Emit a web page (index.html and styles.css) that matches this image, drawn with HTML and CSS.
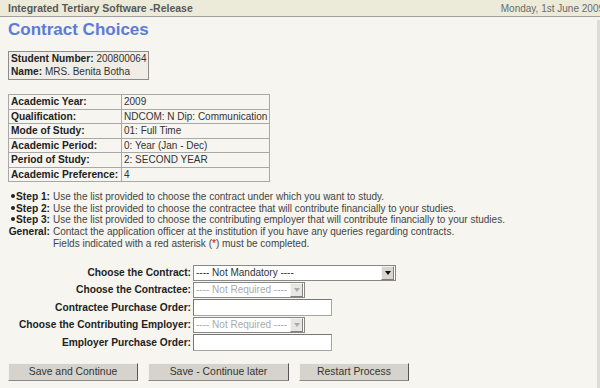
FILE: index.html
```html
<!DOCTYPE html>
<html>
<head>
<meta charset="utf-8">
<link rel="stylesheet" href="styles.css">
</head>
<body>
<div class="topbar">
  <span class="app">Integrated Tertiary Software -Release</span>
  <span class="date">Monday, 1st June 2009</span>
</div>
<div class="content">
  <h1 class="title">Contract Choices</h1>
  <div class="student">
    <div><b>Student Number:</b> 200800064</div>
    <div><b>Name:</b> MRS. Benita Botha</div>
  </div>
  <table class="info">
    <tr><th>Academic Year:</th><td>2009</td></tr>
    <tr><th>Qualification:</th><td>NDCOM: N Dip: Communication</td></tr>
    <tr><th>Mode of Study:</th><td>01: Full Time</td></tr>
    <tr><th>Academic Period:</th><td>0: Year (Jan - Dec)</td></tr>
    <tr><th>Period of Study:</th><td>2: SECOND YEAR</td></tr>
    <tr><th>Academic Preference:</th><td>4</td></tr>
  </table>
  <div class="steps">
    <div class="sl"><span class="dot"></span>Step 1:</div><div>Use the list provided to choose the contract under which you want to study.</div>
    <div class="sl"><span class="dot"></span>Step 2:</div><div>Use the list provided to choose the contractee that will contribute financially to your studies.</div>
    <div class="sl"><span class="dot"></span>Step 3:</div><div>Use the list provided to choose the contributing employer that will contribute financially to your studies.</div>
    <div class="sl">General:</div><div>Contact the application officer at the institution if you have any queries regarding contracts.<br>Fields indicated with a red asterisk (<span class="red">*</span>) must be completed.</div>
  </div>
  <div class="form">
    <label>Choose the Contract:</label>
    <div class="sel wide"><span class="txt">---- Not Mandatory ----</span><span class="arr"><i></i></span></div>
    <label>Choose the Contractee:</label>
    <div class="sel small dis"><span class="txt">---- Not Required ----</span><span class="arr"><i></i></span></div>
    <label>Contractee Purchase Order:</label>
    <div class="inp"></div>
    <label>Choose the Contributing Employer:</label>
    <div class="sel small dis"><span class="txt">---- Not Required ----</span><span class="arr"><i></i></span></div>
    <label>Employer Purchase Order:</label>
    <div class="inp"></div>
  </div>
  <div class="buttons">
    <button class="b1">Save and Continue</button>
    <button class="b2">Save - Continue later</button>
    <button class="b3">Restart Process</button>
  </div>
</div>
</body>
</html>
```
FILE: styles.css
```css
html, body { margin: 0; padding: 0; }
body {
  width: 600px; height: 388px; overflow: hidden;
  background: #f6f5ef;
  font-family: "Liberation Sans", Arial, sans-serif;
  font-size: 10px;
  color: #333;
  position: relative;
}
.topbar {
  height: 16px;
  background: #ecead9;
  border-bottom: 1px solid #a0a0a0;
  display: flex; justify-content: space-between; align-items: center;
  padding-left: 8px;
  margin-right: -3px;
}
.app { font-weight: bold; color: #585858; font-size: 10.5px; }
.date { color: #6a6a6a; font-size: 10px; margin-right: -1px; }
.content {
  padding: 0 8px;
  border-right: 3px solid #dcdcd8;
  margin-top: 3px;
  height: 368px;
}
.title {
  margin: 0; padding-top: 0;
  font-size: 17px; font-weight: bold; color: #5b7bd8;
  line-height: 20px;
}
.student {
  margin-top: 11px;
  display: inline-block;
  border: 1px solid #8c8c8c;
  background: #efede5;
  padding: 1px 2px 1px 2px;
  line-height: 12.5px;
  white-space: nowrap;
}
.student b, .info th, .sl, .form label { color: #222; font-size: 10.2px; }
.info {
  margin-top: 14px;
  border-collapse: collapse;
}
.info th, .info td {
  border: 1px solid #a8a8a8;
  padding: 0 2px;
  height: 13.5px;
  line-height: 13.5px;
  text-align: left;
  white-space: nowrap;
}
.info th { width: 108px; font-weight: bold; }
.info td { width: 142px; }
.steps {
  margin-top: 9px;
  display: grid;
  grid-template-columns: 42px auto;
  column-gap: 3px;
  line-height: 11.7px;
  color: #444;
}
.sl { font-weight: bold; text-align: right; }
.dot { display: inline-block; width: 4px; height: 4px; border-radius: 50%; background: #222; margin-right: 1px; vertical-align: 2px; }
.red { color: #d00; }
.form {
  margin-top: 15px;
  display: grid;
  grid-template-columns: 183px auto;
  column-gap: 2px;
  row-gap: 1px;
  align-items: center;
}
.form label { text-align: right; font-weight: bold; }
.sel, .inp {
  height: 14px;
  background: #fff;
  border: 1px solid #7f9db9;
  box-sizing: content-box;
  display: flex; align-items: center;
  justify-self: start;
}
.inp { width: 137px; height: 15px; border: 1px solid #a5a5a5; border-top-color: #777; border-left-color: #777; }
.sel { border: 1px solid #888; }
.sel.wide { width: 201px; }
.sel.small { width: 110px; }
.sel .txt { flex: 1; padding-left: 2px; color: #333; white-space: nowrap; font-size: 10px; }
.sel.dis .txt { color: #aaa; }
.sel .arr {
  width: 11px; height: 12px; margin-right: 1px;
  background: #d8d6ce;
  border: 1px solid; border-color: #f4f4f4 #808080 #808080 #f4f4f4;
  display: flex; align-items: center; justify-content: center;
}
.sel .arr i { width: 0; height: 0; border-left: 3px solid transparent; border-right: 3px solid transparent; border-top: 4px solid #111; }
.sel.dis .arr { background: #e8e6e0; }
.sel.dis .arr i { border-top-color: #aaa; }
.buttons {
  margin-top: 12px;
  display: flex; gap: 10px;
}
.buttons button {
  height: 18px;
  font-family: "Liberation Sans", Arial, sans-serif;
  font-size: 10.4px; color: #333;
  background: #d6d3cc;
  border: 1px solid; border-color: #f2f2f2 #555 #8a8a8a #f2f2f2;
  padding: 0;
}
.b1 { width: 130px; }
.b2 { width: 141px; }
.b3 { width: 110px; }
```
